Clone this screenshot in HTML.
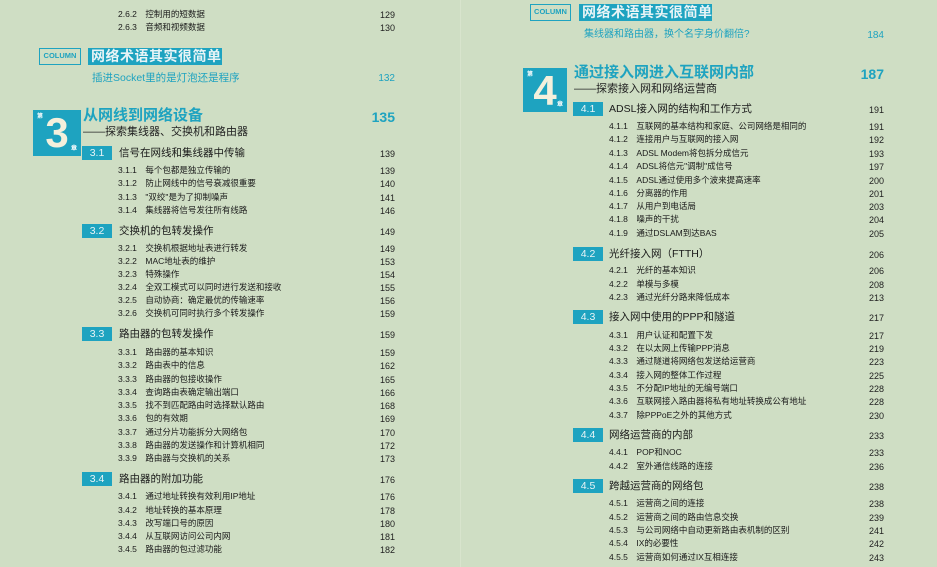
<!DOCTYPE html><html><head><meta charset="utf-8"><style>
*{margin:0;padding:0;box-sizing:border-box}
body{width:937px;height:567px;background:#cfdec4;position:relative;overflow:hidden;font-family:"Liberation Sans","Noto Sans CJK SC",sans-serif;color:#222}
.d{position:absolute;left:460px;top:0;width:1px;height:567px;background:#d8e4cd}
.l{position:absolute;height:14px;line-height:14px;white-space:nowrap}
.s{font-size:8.5px;color:#1a1a1a}
.sec{font-size:10.5px;color:#1a1a1a}
.n{position:absolute;text-align:right;width:60px;font-size:9px;padding-top:1px}
.box{position:absolute;background:#1ea3c0;color:#e8f4f6;font-size:10.5px;text-align:center;height:14px;line-height:14px}
.t{color:#1ea3c0}
.col{position:absolute;border:1.5px solid #1ea3c0;color:#1ea3c0;font-size:7.5px;font-weight:bold;text-align:center;line-height:14px}
.ct{position:absolute;background:#1ea3c0;color:#e8f4f6;font-size:14px;letter-spacing:.5px;font-weight:bold;padding:0 3px;line-height:17px;height:17px;white-space:nowrap;overflow:hidden}
.ch{position:absolute;background:#1ea3c0;color:#f4f0dc;font-weight:bold;font-size:42px;text-align:center;line-height:46px}
.ch i{position:absolute;font-style:normal;font-size:6px;line-height:8px;color:#fff}
.cht{position:absolute;color:#1ea3c0;font-size:15px;font-weight:bold;line-height:18px;height:18px;white-space:nowrap}
.sub{position:absolute;font-size:11px;line-height:14px;white-space:nowrap}
</style></head><body>
<div class="d"></div>
<!-- LEFT -->
<div class="l s" style="top:7px;left:118px">2.6.2　控制用的短数据</div><div class="l n" style="top:7px;left:335px">129</div>
<div class="l s" style="top:20px;left:118px">2.6.3　音频和视频数据</div><div class="l n" style="top:20px;left:335px">130</div>
<div class="col" style="left:39px;top:48px;width:42px;height:17px">COLUMN</div>
<div class="ct" style="left:88px;top:48px;width:134px">网络术语其实很简单</div>
<div class="l t" style="top:71px;left:92px;font-size:10.5px">插进Socket里的是灯泡还是程序</div><div class="l t n" style="top:71px;left:335px;font-size:10px">132</div>
<div class="ch" style="left:33px;top:110px;width:48px;height:46px">3<i style="left:4px;top:3px">第</i><i style="right:4px;bottom:3px">章</i></div>
<div class="cht" style="left:83px;top:107px">从网线到网络设备</div><div class="cht n" style="left:335px;top:107px;font-size:14px">135</div>
<div class="sub" style="top:125px;left:83px">——探索集线器、交换机和路由器</div>

<div class="box" style="left:82px;top:146px;width:30px">3.1</div><div class="l sec" style="top:146px;left:119px">信号在网线和集线器中传输</div><div class="l n" style="top:146px;left:335px">139</div>
<div class="l s" style="top:163px;left:118px">3.1.1　每个包都是独立传输的</div><div class="l n" style="top:163px;left:335px">139</div>
<div class="l s" style="top:176px;left:118px">3.1.2　防止网线中的信号衰减很重要</div><div class="l n" style="top:176px;left:335px">140</div>
<div class="l s" style="top:190px;left:118px">3.1.3　"双绞"是为了抑制噪声</div><div class="l n" style="top:190px;left:335px">141</div>
<div class="l s" style="top:203px;left:118px">3.1.4　集线器将信号发往所有线路</div><div class="l n" style="top:203px;left:335px">146</div>

<div class="box" style="left:82px;top:224px;width:30px">3.2</div><div class="l sec" style="top:224px;left:119px">交换机的包转发操作</div><div class="l n" style="top:224px;left:335px">149</div>
<div class="l s" style="top:241px;left:118px">3.2.1　交换机根据地址表进行转发</div><div class="l n" style="top:241px;left:335px">149</div>
<div class="l s" style="top:254px;left:118px">3.2.2　MAC地址表的维护</div><div class="l n" style="top:254px;left:335px">153</div>
<div class="l s" style="top:267px;left:118px">3.2.3　特殊操作</div><div class="l n" style="top:267px;left:335px">154</div>
<div class="l s" style="top:280px;left:118px">3.2.4　全双工模式可以同时进行发送和接收</div><div class="l n" style="top:280px;left:335px">155</div>
<div class="l s" style="top:293px;left:118px">3.2.5　自动协商：确定最优的传输速率</div><div class="l n" style="top:293px;left:335px">156</div>
<div class="l s" style="top:306px;left:118px">3.2.6　交换机可同时执行多个转发操作</div><div class="l n" style="top:306px;left:335px">159</div>

<div class="box" style="left:82px;top:327px;width:30px">3.3</div><div class="l sec" style="top:327px;left:119px">路由器的包转发操作</div><div class="l n" style="top:327px;left:335px">159</div>
<div class="l s" style="top:345px;left:118px">3.3.1　路由器的基本知识</div><div class="l n" style="top:345px;left:335px">159</div>
<div class="l s" style="top:358px;left:118px">3.3.2　路由表中的信息</div><div class="l n" style="top:358px;left:335px">162</div>
<div class="l s" style="top:372px;left:118px">3.3.3　路由器的包接收操作</div><div class="l n" style="top:372px;left:335px">165</div>
<div class="l s" style="top:385px;left:118px">3.3.4　查询路由表确定输出端口</div><div class="l n" style="top:385px;left:335px">166</div>
<div class="l s" style="top:398px;left:118px">3.3.5　找不到匹配路由时选择默认路由</div><div class="l n" style="top:398px;left:335px">168</div>
<div class="l s" style="top:411px;left:118px">3.3.6　包的有效期</div><div class="l n" style="top:411px;left:335px">169</div>
<div class="l s" style="top:425px;left:118px">3.3.7　通过分片功能拆分大网络包</div><div class="l n" style="top:425px;left:335px">170</div>
<div class="l s" style="top:438px;left:118px">3.3.8　路由器的发送操作和计算机相同</div><div class="l n" style="top:438px;left:335px">172</div>
<div class="l s" style="top:451px;left:118px">3.3.9　路由器与交换机的关系</div><div class="l n" style="top:451px;left:335px">173</div>

<div class="box" style="left:82px;top:472px;width:30px">3.4</div><div class="l sec" style="top:472px;left:119px">路由器的附加功能</div><div class="l n" style="top:472px;left:335px">176</div>
<div class="l s" style="top:489px;left:118px">3.4.1　通过地址转换有效利用IP地址</div><div class="l n" style="top:489px;left:335px">176</div>
<div class="l s" style="top:503px;left:118px">3.4.2　地址转换的基本原理</div><div class="l n" style="top:503px;left:335px">178</div>
<div class="l s" style="top:516px;left:118px">3.4.3　改写端口号的原因</div><div class="l n" style="top:516px;left:335px">180</div>
<div class="l s" style="top:529px;left:118px">3.4.4　从互联网访问公司内网</div><div class="l n" style="top:529px;left:335px">181</div>
<div class="l s" style="top:542px;left:118px">3.4.5　路由器的包过滤功能</div><div class="l n" style="top:542px;left:335px">182</div>

<!-- RIGHT -->
<div class="col" style="left:530px;top:4px;width:41px;height:17px">COLUMN</div>
<div class="ct" style="left:579px;top:4px;width:133px">网络术语其实很简单</div>
<div class="l t" style="top:28px;left:584px;font-size:10px">集线器和路由器，换个名字身价翻倍?</div><div class="l t n" style="top:28px;left:824px;font-size:10px">184</div>
<div class="ch" style="left:523px;top:68px;width:44px;height:44px">4<i style="left:4px;top:3px">第</i><i style="right:4px;bottom:3px">章</i></div>
<div class="cht" style="left:574px;top:64px">通过接入网进入互联网内部</div><div class="cht n" style="left:824px;top:64px;font-size:14px">187</div>
<div class="sub" style="top:82px;left:574px">——探索接入网和网络运营商</div>

<div class="box" style="left:573px;top:102px;width:30px">4.1</div><div class="l sec" style="top:102px;left:609px">ADSL接入网的结构和工作方式</div><div class="l n" style="top:102px;left:824px">191</div>
<div class="l s" style="top:119px;left:609px">4.1.1　互联网的基本结构和家庭、公司网络是相同的</div><div class="l n" style="top:119px;left:824px">191</div>
<div class="l s" style="top:132px;left:609px">4.1.2　连接用户与互联网的接入网</div><div class="l n" style="top:132px;left:824px">192</div>
<div class="l s" style="top:146px;left:609px">4.1.3　ADSL Modem将包拆分成信元</div><div class="l n" style="top:146px;left:824px">193</div>
<div class="l s" style="top:159px;left:609px">4.1.4　ADSL将信元"调制"成信号</div><div class="l n" style="top:159px;left:824px">197</div>
<div class="l s" style="top:173px;left:609px">4.1.5　ADSL通过使用多个波来提高速率</div><div class="l n" style="top:173px;left:824px">200</div>
<div class="l s" style="top:186px;left:609px">4.1.6　分离器的作用</div><div class="l n" style="top:186px;left:824px">201</div>
<div class="l s" style="top:199px;left:609px">4.1.7　从用户到电话局</div><div class="l n" style="top:199px;left:824px">203</div>
<div class="l s" style="top:212px;left:609px">4.1.8　噪声的干扰</div><div class="l n" style="top:212px;left:824px">204</div>
<div class="l s" style="top:226px;left:609px">4.1.9　通过DSLAM到达BAS</div><div class="l n" style="top:226px;left:824px">205</div>

<div class="box" style="left:573px;top:247px;width:30px">4.2</div><div class="l sec" style="top:247px;left:609px">光纤接入网（FTTH）</div><div class="l n" style="top:247px;left:824px">206</div>
<div class="l s" style="top:263px;left:609px">4.2.1　光纤的基本知识</div><div class="l n" style="top:263px;left:824px">206</div>
<div class="l s" style="top:277px;left:609px">4.2.2　单模与多模</div><div class="l n" style="top:277px;left:824px">208</div>
<div class="l s" style="top:290px;left:609px">4.2.3　通过光纤分路来降低成本</div><div class="l n" style="top:290px;left:824px">213</div>

<div class="box" style="left:573px;top:310px;width:30px">4.3</div><div class="l sec" style="top:310px;left:609px">接入网中使用的PPP和隧道</div><div class="l n" style="top:310px;left:824px">217</div>
<div class="l s" style="top:328px;left:609px">4.3.1　用户认证和配置下发</div><div class="l n" style="top:328px;left:824px">217</div>
<div class="l s" style="top:341px;left:609px">4.3.2　在以太网上传输PPP消息</div><div class="l n" style="top:341px;left:824px">219</div>
<div class="l s" style="top:354px;left:609px">4.3.3　通过隧道将网络包发送给运营商</div><div class="l n" style="top:354px;left:824px">223</div>
<div class="l s" style="top:368px;left:609px">4.3.4　接入网的整体工作过程</div><div class="l n" style="top:368px;left:824px">225</div>
<div class="l s" style="top:381px;left:609px">4.3.5　不分配IP地址的无编号端口</div><div class="l n" style="top:381px;left:824px">228</div>
<div class="l s" style="top:394px;left:609px">4.3.6　互联网接入路由器将私有地址转换成公有地址</div><div class="l n" style="top:394px;left:824px">228</div>
<div class="l s" style="top:408px;left:609px">4.3.7　除PPPoE之外的其他方式</div><div class="l n" style="top:408px;left:824px">230</div>

<div class="box" style="left:573px;top:428px;width:30px">4.4</div><div class="l sec" style="top:428px;left:609px">网络运营商的内部</div><div class="l n" style="top:428px;left:824px">233</div>
<div class="l s" style="top:445px;left:609px">4.4.1　POP和NOC</div><div class="l n" style="top:445px;left:824px">233</div>
<div class="l s" style="top:459px;left:609px">4.4.2　室外通信线路的连接</div><div class="l n" style="top:459px;left:824px">236</div>

<div class="box" style="left:573px;top:479px;width:30px">4.5</div><div class="l sec" style="top:479px;left:609px">跨越运营商的网络包</div><div class="l n" style="top:479px;left:824px">238</div>
<div class="l s" style="top:496px;left:609px">4.5.1　运营商之间的连接</div><div class="l n" style="top:496px;left:824px">238</div>
<div class="l s" style="top:510px;left:609px">4.5.2　运营商之间的路由信息交换</div><div class="l n" style="top:510px;left:824px">239</div>
<div class="l s" style="top:523px;left:609px">4.5.3　与公司网络中自动更新路由表机制的区别</div><div class="l n" style="top:523px;left:824px">241</div>
<div class="l s" style="top:536px;left:609px">4.5.4　IX的必要性</div><div class="l n" style="top:536px;left:824px">242</div>
<div class="l s" style="top:550px;left:609px">4.5.5　运营商如何通过IX互相连接</div><div class="l n" style="top:550px;left:824px">243</div>
</body></html>
